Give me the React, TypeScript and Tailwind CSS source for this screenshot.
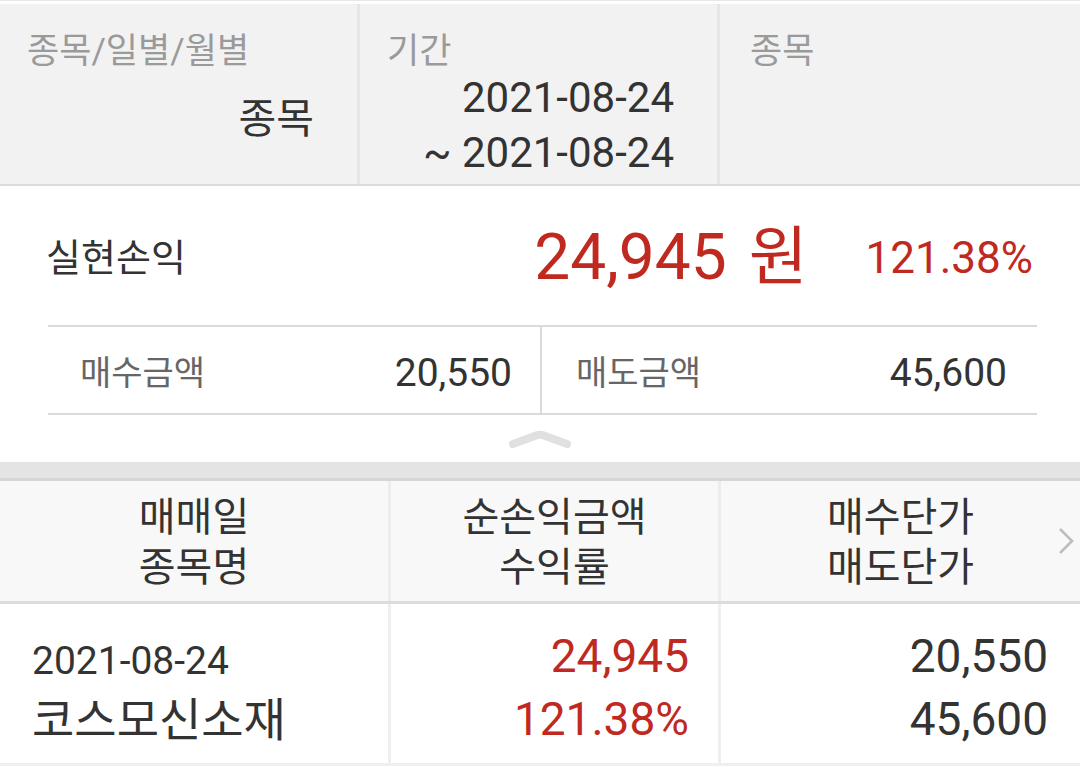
export default function App() {
  return (
    <div className="w-[1080px] h-[782px] overflow-hidden bg-white text-[#333] font-['Roboto','Noto_Sans_CJK_KR',sans-serif]">
      {/* filter header */}
      <div className="h-px bg-[#e8e8e8]" />
      <div className="h-[3px]" />
      <div className="flex h-[182px] bg-[#f2f2f2] border-b-2 border-[#dcdcdc]">
        <div className="w-[357px] flex flex-col pt-[30px] pl-[27px] pr-[43px]">
          <span className="text-[35px] leading-[36px] text-[#9a9a9a]">종목/일별/월별</span>
          <span className="self-end mt-[25px] text-[41px] leading-[48px]">종목</span>
        </div>
        <div className="w-[3px] bg-[#e6e6e6]" />
        <div className="w-[357px] flex flex-col pt-[30px] pl-[27px] pr-[43px]">
          <span className="text-[35px] leading-[36px] text-[#9a9a9a]">기간</span>
          <div className="flex flex-col items-end text-[42px] leading-[55px]">
            <span>2021-08-24</span>
            <span>~ 2021-08-24</span>
          </div>
        </div>
        <div className="w-[3px] bg-[#e6e6e6]" />
        <div className="flex-1 pt-[30px] pl-[30px]">
          <span className="text-[35px] leading-[36px] text-[#9a9a9a]">종목</span>
        </div>
      </div>

      {/* summary */}
      <div className="flex items-center h-[139px] pt-[4px] pl-[46px] pr-[47px]">
        <span className="text-[38px] leading-[48px]">실현손익</span>
        <div className="ml-auto flex items-center text-[64px] leading-[76px] text-[#c0291f]">
          <span>24,945</span>
          <span className="ml-[22px]">원</span>
        </div>
        <span className="ml-[58px] text-[44px] leading-[56px] text-[#c0291f]">121.38%</span>
      </div>
      <div className="ml-[48px] mr-[43px] flex h-[90px] border-y-2 border-[#dadada]">
        <div className="w-[492px] flex items-center justify-between pt-[6px] pl-[32px] pr-[28px]">
          <span className="text-[34px] text-[#666]">매수금액</span>
          <span className="text-[39px]">20,550</span>
        </div>
        <div className="w-[2px] bg-[#dadada]" />
        <div className="flex-1 flex items-center justify-between pt-[6px] pl-[34px] pr-[30px]">
          <span className="text-[34px] text-[#666]">매도금액</span>
          <span className="text-[39px]">45,600</span>
        </div>
      </div>
      <div className="h-[47px] flex items-center justify-center">
        <svg width="66" height="22" viewBox="0 0 66 22" fill="none">
          <path d="M6 16 L29 7.5 Q33 6 37 7.5 L60 16" stroke="#e0e0e0" strokeWidth="8" strokeLinecap="round" strokeLinejoin="round" />
        </svg>
      </div>
      <div className="h-[19px] bg-[#e4e4e4] border-b-[3px] border-[#d6d6d6]" />

      {/* table header */}
      <div className="relative flex h-[123px] bg-[#f8f8f8] border-b-[3px] border-[#dcdcdc] text-[40px] leading-[50px]">
        <div className="w-[388px] flex flex-col items-center pt-[12px]">
          <span>매매일</span>
          <span>종목명</span>
        </div>
        <div className="w-[3px] bg-[#ececec]" />
        <div className="w-[327px] flex flex-col items-center pt-[12px]">
          <span>순손익금액</span>
          <span>수익률</span>
        </div>
        <div className="w-[3px] bg-[#ececec]" />
        <div className="flex-1 flex flex-col items-center pt-[12px]">
          <span>매수단가</span>
          <span>매도단가</span>
        </div>
        <svg className="absolute right-[5px] top-[46px]" width="18" height="28" viewBox="0 0 18 28" fill="none">
          <path d="M3 2 L15 14 L3 26" stroke="#bdbdbd" strokeWidth="2.6" />
        </svg>
      </div>

      {/* data row */}
      <div className="flex h-[162px] border-b-[3px] border-[#efefef]">
        <div className="w-[388px] flex flex-col pt-[31px] pl-[32px]">
          <span className="text-[39px] leading-[52px]">2021-08-24</span>
          <span className="mt-[3px] text-[46px] leading-[60px]">코스모신소재</span>
        </div>
        <div className="w-[3px] bg-[#efefef]" />
        <div className="w-[327px] flex flex-col items-end pt-[21px] pr-[29px] text-[46px] leading-[63px] text-[#c0291f]">
          <span>24,945</span>
          <span>121.38%</span>
        </div>
        <div className="w-[3px] bg-[#efefef]" />
        <div className="flex-1 flex flex-col items-end pt-[21px] pr-[32px] text-[46px] leading-[63px]">
          <span>20,550</span>
          <span>45,600</span>
        </div>
      </div>
    </div>
  );
}
